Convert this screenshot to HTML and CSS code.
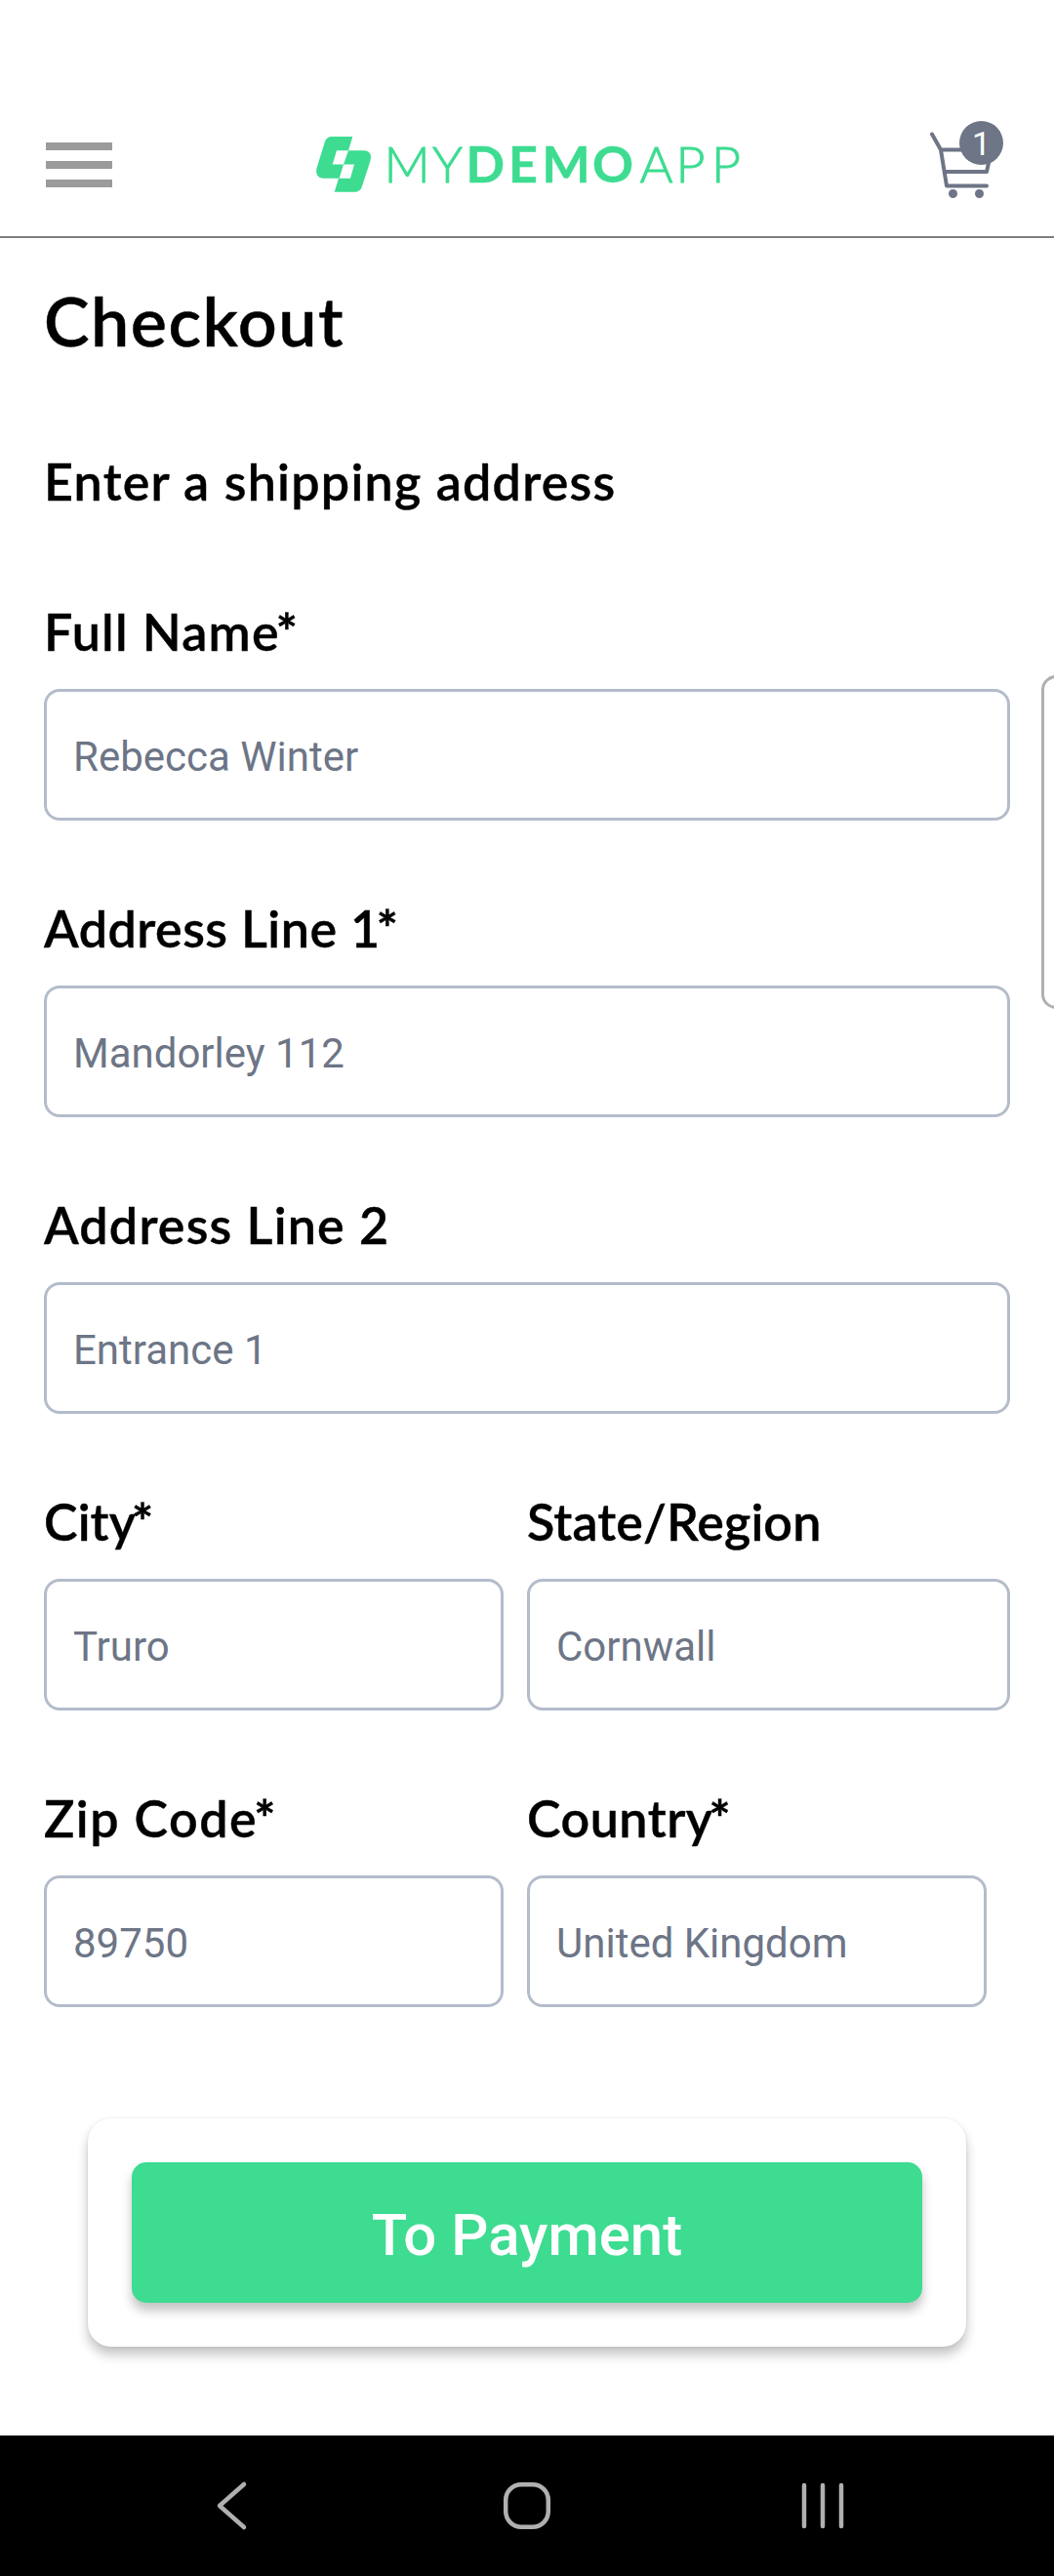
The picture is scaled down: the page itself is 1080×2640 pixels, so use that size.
FILE: index.html
```html
<!DOCTYPE html>
<html lang="en">
<head>
<meta charset="utf-8">
<title>Checkout</title>
<link rel="stylesheet" href="styles.css">
</head>
<body>
<div class="screen">
  <header class="topbar">
    <svg class="menu" width="68" height="46" viewBox="0 0 68 46" fill="#9b9b9b"><path d="M0 0h68v8H0zM0 19h68v8H0zM0 38h68v8H0z"/></svg>
    <svg class="logo" width="440" height="60" viewBox="0 0 440 60" fill="#3ddc91">
      <path d="M16 2H37.300L33 16.300H21L16.700 30.500H28L23.700 44.800H7Q-1 44 .3 35L9 7Q11 2 16 2Z"/>
      <path d="M33 16.300H50Q57.500 17.500 55.700 26L47 53Q45 58.800 39.500 58.800H18.700L23 44.800H35L39 30.500H28Z"/>
      <text class="thin" y="49" x="69.500 119">MY</text>
      <text class="bold" y="49" x="153.500 197 231.500 283">DEMO</text>
      <text class="thin" y="49" x="331.500 368.500 405">APP</text>
    </svg>
    <div class="cart">
      <svg width="66" height="72" viewBox="0 0 66 72" fill="none" stroke="#6d7586" stroke-width="4" stroke-linecap="round" stroke-linejoin="round">
        <path d="M4 15.500 13 31.500 19 68.500H60M13 31.500H65L60 54H17"/>
      </svg>
      <i class="wheel"></i><i class="wheel wheel-right"></i>
      <span class="badge">1</span>
    </div>
  </header>

  <main class="content">
    <h1>Checkout</h1>
    <h2>Enter a shipping address</h2>
    <div class="field"><div class="label">Full Name<span class="req">*</span></div><div class="input">Rebecca Winter</div></div>
    <div class="field"><div class="label medium">Address Line 1<span class="req">*</span></div><div class="input">Mandorley 112</div></div>
    <div class="field"><div class="label">Address Line 2</div><div class="input">Entrance 1</div></div>
    <div class="row">
      <div class="field"><div class="label tight">City<span class="req">*</span></div><div class="input">Truro</div></div>
      <div class="field"><div class="label tight">State/Region</div><div class="input">Cornwall</div></div>
    </div>
    <div class="row narrow">
      <div class="field"><div class="label wide">Zip Code<span class="req">*</span></div><div class="input">89750</div></div>
      <div class="field"><div class="label medium">Country<span class="req">*</span></div><div class="input">United Kingdom</div></div>
    </div>
    <div class="card"><div class="button">To Payment</div></div>
  </main>

  <nav class="navbar">
    <svg width="36" height="52" viewBox="0 0 36 52"><path d="M31 4 6 26 31 48"/></svg>
    <svg width="52" height="52" viewBox="0 0 52 52"><rect x="4.200" y="4.200" width="43.600" height="43.600" rx="16"/></svg>
    <svg width="46" height="52" viewBox="0 0 46 52"><path d="M4 5V47M23 5V47M42 5V47"/></svg>
  </nav>
  <div class="edge-handle"></div>
</div>
</body>
</html>
```
FILE: styles.css
```css
* { box-sizing: border-box; }
body { margin: 0; background: #fff; }
.screen {
  position: relative;
  width: 1080px;
  height: 2640px;
  overflow: hidden;
  display: flex;
  flex-direction: column;
  background: #fff;
  font-family: Roboto, "Liberation Sans", sans-serif;
}
.topbar {
  height: 244px;
  padding: 0 51px 0 47px;
  border-bottom: 2px solid #7f7f7f;
  display: flex;
  justify-content: space-between;
  align-items: flex-start;
}
.menu { margin-top: 146px; }
.logo { margin: 138px 0 0 22px; overflow: visible; }
.logo text { font-family: Lato, sans-serif; font-size: 52px; }
.logo .thin { font-weight: 300; stroke: #3ddc91; stroke-width: .9px; }
.logo .bold { font-weight: 700; stroke: #3ddc91; stroke-width: .5px; }
.cart { position: relative; width: 78px; height: 82px; margin-top: 122px; }
.cart svg { display: block; }
.wheel {
  position: absolute;
  left: 20.500px;
  top: 71.500px;
  width: 9px;
  height: 9px;
  border-radius: 50%;
  background: #6d7586;
}
.wheel-right { left: 48px; }
.badge {
  position: absolute;
  left: 32px;
  top: 2px;
  width: 45px;
  height: 45px;
  border-radius: 50%;
  background: #6d7586;
  color: #fff;
  font-size: 34px;
  line-height: 47px;
  text-align: center;
}
.content { flex: 1; padding: 0 45px; }
h1, h2, .label {
  margin: 0;
  font-family: Lato, sans-serif;
  font-weight: 600;
  color: #000;
  white-space: nowrap;
  -webkit-text-stroke: .4px #000;
}
h1 { margin-top: 44px; font-size: 70px; line-height: 80px; letter-spacing: 1.500px; }
h2 { margin-top: 93px; font-size: 52px; line-height: 64px; letter-spacing: 1.250px; }
.field { height: 304px; padding-top: 90px; }
.label { height: 64px; font-size: 52px; line-height: 64px; letter-spacing: 1.200px; }
.label.tight { letter-spacing: .1px; }
.label.medium { letter-spacing: .5px; }
.label.wide { letter-spacing: 1.500px; }
.req { margin-left: -4px; font-weight: 700; }
.input {
  height: 135px;
  margin-top: 27px;
  border: 3px solid #b4bccb;
  border-radius: 16px;
  padding-left: 27px;
  font-size: 42px;
  line-height: 133px;
  color: #6d7586;
}
.row { display: grid; grid-template-columns: 471px 495px; gap: 24px; }
.row.narrow { grid-template-columns: 471px 471px; }
.card {
  width: 900px;
  height: 234px;
  margin: 126px auto 0;
  padding: 45px;
  border-radius: 24px;
  background: #fff;
  box-shadow: 0 8px 12px rgba(0, 0, 0, .24), 0 0 3px rgba(0, 0, 0, .08);
}
.button {
  height: 144px;
  border-radius: 15px;
  background: #3ddc91;
  box-shadow: 0 8px 11px rgba(0, 0, 0, .24);
  color: #fff;
  font-size: 60px;
  font-weight: 500;
  line-height: 149px;
  text-align: center;
}
.navbar {
  height: 144px;
  padding: 0 214px 0 219px;
  background: #000;
  display: flex;
  justify-content: space-between;
  align-items: center;
}
.navbar svg { fill: none; stroke: #b0b0b0; stroke-width: 4.500px; stroke-linecap: round; stroke-linejoin: round; }
.navbar svg:nth-child(2) { margin-left: 4px; }
.edge-handle {
  position: absolute;
  left: 1067px;
  top: 692px;
  width: 40px;
  height: 342px;
  border: 3px solid #b0b0b0;
  border-radius: 15px;
  background: #fff;
}
```
